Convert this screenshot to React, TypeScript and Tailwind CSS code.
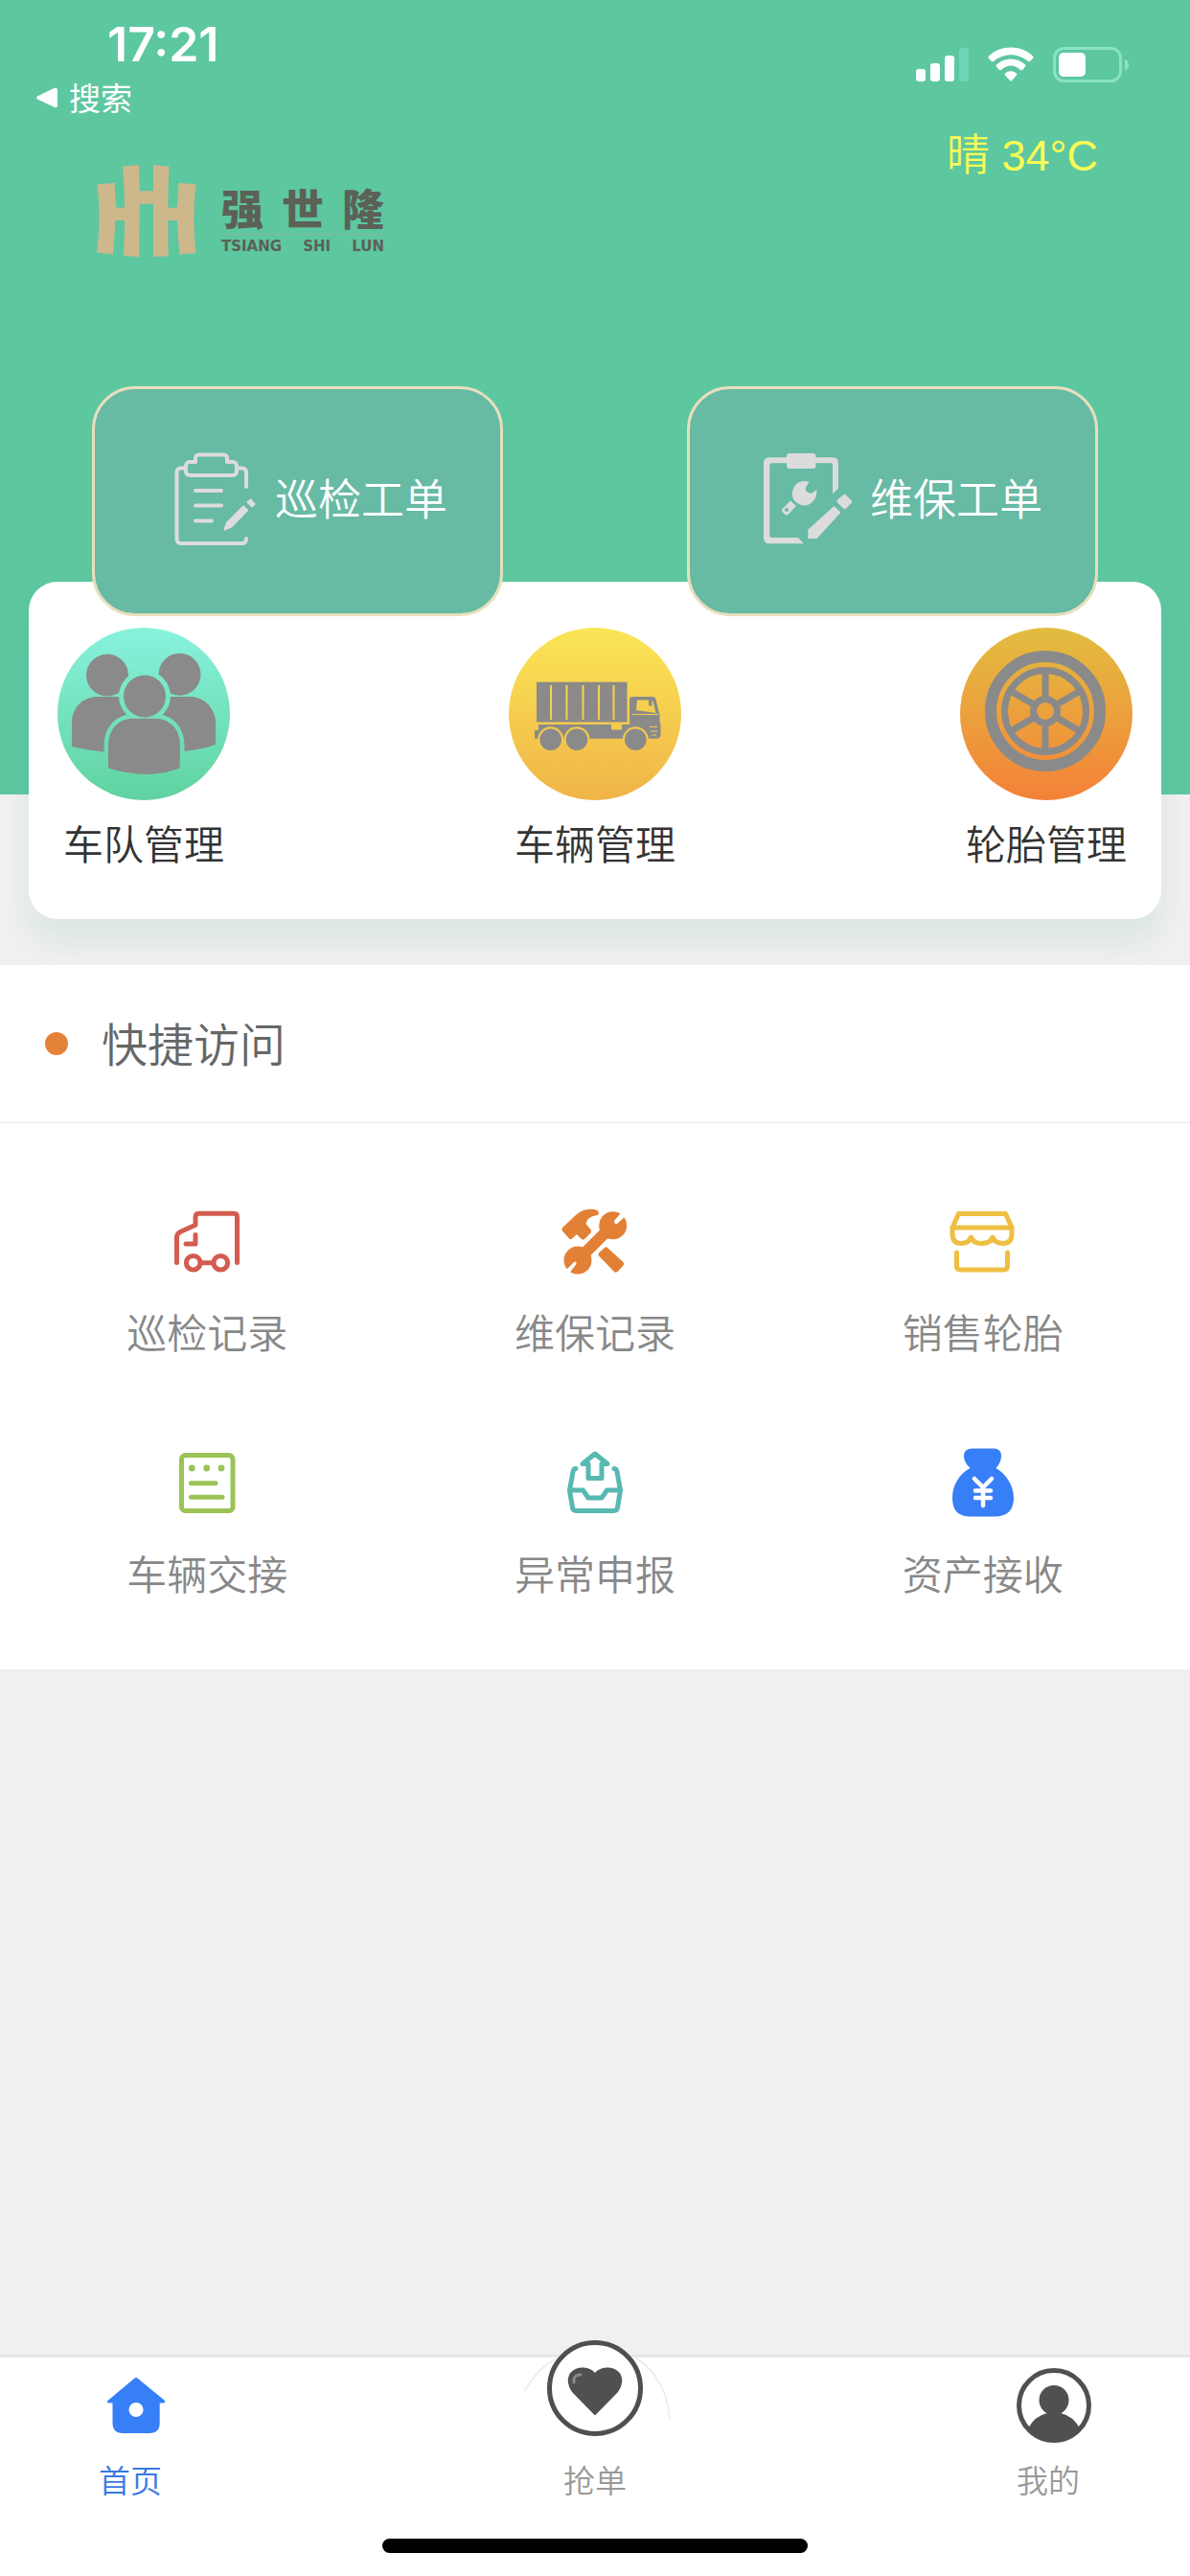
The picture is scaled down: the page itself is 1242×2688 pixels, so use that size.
import type { ReactNode } from "react";

const GRAY = "#8a8a8a";
const SILVER = "#dcdcdc";
const BLUE = "#377ff6";

function SignalIcon() {
  return (
    <svg width="55" height="37" viewBox="0 0 55 37" fill="#fff" aria-hidden="true">
      <rect x="0" y="23" width="10" height="13" rx="3" />
      <rect x="15" y="17" width="10" height="19" rx="3" />
      <rect x="30" y="9" width="10" height="27" rx="3" />
      <rect x="45" y="1" width="10" height="35" rx="3" fill="#70d5b4" />
    </svg>
  );
}

function WifiIcon() {
  return (
    <svg width="48" height="37" viewBox="0 0 48 37" fill="#fff" aria-hidden="true">
      <path d="M1 9.500 C13 -2.500 35 -2.500 47 9.500 Q48 11 47 12 L44 15 Q43 15.500 42 15 C32 6 16 6 6 15 Q5 15.500 4 15 L1 12 Q0 11 1 9.500Z" />
      <path d="M9 18.500 C17 10.500 31 10.500 39 18.500 Q40 19.500 39 20.500 L36 24 Q35 24.500 34 24 C28 18 20 18 14 24 Q13 24.500 12 24 L9 20.500 Q8 19.500 9 18.500Z" />
      <path d="M18 27.500 Q24 23 30 27.500 Q31 28.500 30 29.500 L25 35 Q24 36.500 23 35 L18 29.500 Q17 28.500 18 27.500Z" />
    </svg>
  );
}

function BatteryIcon() {
  return (
    <svg width="79" height="37" viewBox="0 0 79 37" aria-hidden="true">
      <rect x="1.500" y="1.500" width="69" height="34" rx="10" fill="none" stroke="#8be2c5" strokeWidth="3" />
      <rect x="6" y="6" width="28" height="25" rx="5" fill="#fff" />
      <path d="M75 12.500 Q79 14.500 79 18.500 T75 24.500Z" fill="#8be2c5" />
    </svg>
  );
}

function LogoMark() {
  return (
    <svg width="104" height="96" viewBox="0 0 104 96" fill="#cdb88b" aria-hidden="true">
      <path d="M0.500 20.500 L18.500 18.700 Q19 32 20.500 44.700 H29 Q29 22 27 1.700 L44 0 Q44.300 14 44.700 27.300 H59 V0 L75.600 1.700 Q74.200 22 74.400 44.700 H83.500 Q85 32 85.500 18.700 L103.500 20.500 Q99 56 103.500 92 L86.500 93.500 Q84.500 75 84 58 H74.400 Q74 77 74.800 95.300 L59 96 V40.700 H44.700 L44.300 96 L28 94.700 Q29 76 29 58 H19.500 Q18.500 75 17 93.500 L0 91.500 Q5 56 0.500 20.500Z" />
    </svg>
  );
}

function InspectIcon() {
  return (
    <svg width="108" height="108" viewBox="0 0 108 108" fill="none" stroke={SILVER} strokeWidth="4" strokeLinecap="round" strokeLinejoin="round" aria-hidden="true">
      <path d="M24 19.500 H19 Q14.500 19.500 14.500 24 V93.500 Q14.500 98 19 98 H82 Q87 98 87 93" />
      <path d="M78 19.500 H82 Q87 19.500 87 24 V39" />
      <path d="M34 13 V9 a3.500 3.500 0 0 1 3.500 -3.500 H63.500 a3.500 3.500 0 0 1 3.500 3.500 V13 H73 a4 4 0 0 1 4 4 V23 a4 4 0 0 1 -4 4 H28 a4 4 0 0 1 -4 -4 V17 a4 4 0 0 1 4 -4 Z" />
      <path d="M34 43 H61 M34 58.500 H61 M34 74.500 H51" />
      <path d="M64.500 83.500 L67 76.500 L84 59.500 L88 63.500 L71.500 80.500Z" fill={SILVER} strokeWidth="2" />
      <path d="M88.500 55 L91.500 52.500 L95.500 57 L93 59.500Z" fill={SILVER} strokeWidth="2" />
    </svg>
  );
}

function RepairIcon() {
  return (
    <svg width="108" height="108" viewBox="0 0 108 108" fill={SILVER} aria-hidden="true">
      <path d="M12 8.300 H31 V14.300 H14.500 Q12.300 14.300 12.300 16.500 V90 Q12.300 92 14.500 92 H42 L48 98.300 H12 Q6 98.300 6 92 V14.500 Q6 8.300 12 8.300Z" />
      <path d="M59 8.300 H78 Q84 8.300 84 14.500 V40.700 L78 46.500 V16.500 Q78 14.300 76 14.300 H59Z" />
      <rect x="30" y="4" width="30.500" height="16" rx="3" />
      <path d="M53.500 33.800 Q44 31 38.500 38 Q34 45 37 52 Q43 60 52 58 Q62 54 61.500 42 L56 46 Q50 45 49.500 40.500Z" />
      <path fillRule="evenodd" d="M34 53.500 L40 59 L32 67.500 Q30 69.500 28 67.500 L25.500 65 Q24.500 63.500 25.500 62Z M30 61 a2 2 0 1 0 0.100 0Z" />
      <path d="M79.500 59 L86.500 65.700 L61.500 93 H52.400 V83.500Z" />
      <path d="M83 52.500 L89.500 47 Q90.500 46.300 91.500 47 L98 53.500 Q98.700 54.500 98 55.500 L91.800 61.800 Q90.500 62.500 89.500 61.800 L83 55.500 Q82 54 83 52.500Z" />
    </svg>
  );
}

function TeamIcon() {
  const body = "M53 146.500 V124 C53 105 64 94.700 79 94.700 H102 C117 94.700 128 105 128 124 L127.500 146.500 Q110 153 95 153 Q72 153 53 146.500Z";
  return (
    <svg width="180" height="180" viewBox="0 0 180 180" fill={GRAY} aria-hidden="true">
      <mask id="team-gap">
        <rect width="180" height="180" fill="#fff" />
        <circle cx="91" cy="71.500" r="27" fill="#000" />
        <path d={body} fill="#000" stroke="#000" strokeWidth="9" />
      </mask>
      <g mask="url(#team-gap)">
        <circle cx="52" cy="49.500" r="22" />
        <circle cx="127.500" cy="48.700" r="22" />
        <path d="M15 124 V97 C16 82 28 72 42 72 H90 V131 Q55 133 15 124Z" />
        <path d="M165 122 V97 C163 82 152 72 138 72 H90 V131 Q135 132 165 122Z" />
      </g>
      <circle cx="91" cy="71.500" r="22" />
      <path d={body} />
    </svg>
  );
}

function TruckIcon() {
  return (
    <svg width="180" height="180" viewBox="0 0 180 180" fill={GRAY} aria-hidden="true">
      <mask id="truck-gap">
        <rect width="180" height="180" fill="#fff" />
        <circle cx="43.700" cy="116.700" r="13.500" fill="#000" />
        <circle cx="71" cy="116.700" r="13.500" fill="#000" />
        <circle cx="132.300" cy="116.700" r="13.500" fill="#000" />
        <path d="M44 60 V96 M60.500 60 V96 M77.500 60 V96 M94 60 V96 M109.500 60 V96" stroke="#000" strokeWidth="2" />
        <path d="M129 90.500 H156 M147 103.500 H155 M148 108 H155 M149 112 H154" stroke="#000" strokeWidth="1" />
        <path d="M134 75.500 H146 V81 L149.500 82 V76.500 H150.500 L153.500 89 L133 86Z" fill="#000" />
      </mask>
      <g mask="url(#truck-gap)">
        <rect x="29" y="56.700" width="94.500" height="41.800" />
        <path d="M31 101 H107 V106.500 H118 V101 H126 V75 Q126 72 129 72 H150 Q153 72 153.500 75 L157.500 91 V98 Q158.500 99 158.500 101 V112 Q158.500 115 155 115.700 H85 L82 115.700 H27 V107 H31Z" />
      </g>
      <circle cx="43.700" cy="116.700" r="11.300" />
      <circle cx="71" cy="116.700" r="11.300" />
      <circle cx="132.300" cy="116.700" r="11.300" />
    </svg>
  );
}

function TireIcon() {
  return (
    <svg width="180" height="180" viewBox="0 0 180 180" fill="none" stroke={GRAY} aria-hidden="true">
      <circle cx="89" cy="87" r="57" strokeWidth="12" />
      <circle cx="89" cy="87" r="42.500" strokeWidth="7" />
      <circle cx="89" cy="87" r="12.500" strokeWidth="7" />
      {[0, 60, 120, 180, 240, 300].map((deg) => (
        <path key={deg} d="M89 72 V46" strokeWidth="7" transform={`rotate(${deg} 89 87)`} />
      ))}
    </svg>
  );
}

function LineIcon({ color, children }: { color: string; children: ReactNode }) {
  return (
    <svg width="72" height="72" viewBox="0 0 72 72" fill="none" stroke={color} strokeWidth="5" strokeLinecap="round" strokeLinejoin="round" aria-hidden="true">
      {children}
    </svg>
  );
}

const inspectLog = (
  <LineIcon color="#d35c4f">
    <path d="M4.500 58.500 V32 Q4.500 28 9 26 L24 19.300 V11 Q24 7.300 27.500 7.300 H64 Q67.500 7.300 67.500 11 V58.500" />
    <path d="M24 29.500 V39 H14" />
    <circle cx="21.700" cy="58.700" r="7.300" />
    <circle cx="50.300" cy="58.700" r="7.300" />
    <path d="M30 58.700 H42" />
  </LineIcon>
);

const repairLog = (
  <svg width="72" height="72" viewBox="0 0 72 72" fill="#e28035" aria-hidden="true">
    <mask id="wrench-gap">
      <rect width="72" height="72" fill="#fff" />
      <path d="M64.500 5 L56 15 Q55.500 18.500 59 18 L69 9Z M5 67 L14 58 Q17 56.500 16.500 60 L8 71Z" fill="#000" />
    </mask>
    <g mask="url(#wrench-gap)">
      <circle cx="54.700" cy="19.700" r="14.500" />
      <circle cx="18" cy="56" r="14.500" />
      <path d="M52 22 L20 54" stroke="#e28035" strokeWidth="12" />
    </g>
    <path d="M3 21 L17 8 Q24 2 34 2.700 Q40 3.500 40 7 Q39.500 9 36 9.500 Q28 11 26.500 18 L31.500 24 q1 2 0 3.500 L25 34 q-2 1 -3 0 l-5 -5 -5 4.500 q-1.500 1 -3 0 L2 25.500 q-1.500 -2.500 1 -4.500Z" />
    <path d="M46 43 Q47.500 41.500 49 43 L65.500 58 Q67 59.500 65.500 61.500 L59.500 68 Q57.500 69.500 56 68 L40 51.500 Q39 50 40 48.500Z" />
  </svg>
);

const sellTires = (
  <LineIcon color="#efbf43">
    <g transform="translate(1 0)">
      <path d="M3 22 L9.500 7.500 H58.500 L65 22 Z" />
      <path d="M3 22 V28 Q3 38.500 12 38.500 Q20 38.500 22.500 32 Q25 38.500 33.500 38.500 Q42.500 38.500 45 32 Q47.500 38.500 56 38.500 Q65 38.500 65 28 V22" />
      <path d="M7.500 48 V62 Q7.500 66 11.500 66 H56.500 Q60.500 66 60.500 62 V48" />
    </g>
  </LineIcon>
);

const handover = (
  <LineIcon color="#9cc357">
    <rect x="9.500" y="7.500" width="53.500" height="58" rx="4" />
    <path d="M19.500 36.700 H45 M19.500 51.300 H52" />
    <g fill="#9cc357" stroke="none">
      <circle cx="20.300" cy="21" r="3.400" />
      <circle cx="35.700" cy="21" r="3.400" />
      <circle cx="51" cy="21" r="3.400" />
    </g>
  </LineIcon>
);

const report = (
  <LineIcon color="#57b9b1">
    <path d="M36 6 L49 16.500 H43 V31.500 H29 V16.500 H23 Z" />
    <path d="M16 21.500 Q13.500 21.500 13 25 L9.500 44 L12.500 62 Q13 65.500 16.500 65.500 H55.500 Q59 65.500 59.500 62 L62.500 44 L59 25 Q58.500 21.500 56 21.500" />
    <path d="M9.500 44 H23.500 L29 52 H43 L48.500 44 H62.500" />
  </LineIcon>
);

const assets = (
  <svg width="72" height="72" viewBox="0 0 72 72" fill={BLUE} aria-hidden="true">
    <path d="M24 0.500 H48 Q55 1 55 8 Q55 15 49.500 21 C60 27 68 39 68 52 C68 65 61 71.500 48 71.500 H23 C10 71.500 4 65 4 52 C4 39 11 27 22.500 21 Q16 15 16 8 Q16 1 24 0.500Z" />
    <path d="M27 32 L36 41 L45 32 M36 41 V60 M28 44.500 H44 M28 52 H44" fill="none" stroke="#fff" strokeWidth="4.500" strokeLinecap="round" />
  </svg>
);

const workOrders = [
  { label: "巡检工单", icon: <InspectIcon /> },
  { label: "维保工单", icon: <RepairIcon /> },
];

const managers = [
  { label: "车队管理", icon: <TeamIcon />, tone: "from-[#88f2dd] to-[#60d2a0]" },
  { label: "车辆管理", icon: <TruckIcon />, tone: "from-[#fae656] to-[#f0b447]" },
  { label: "轮胎管理", icon: <TireIcon />, tone: "from-[#e1bd40] to-[#f38138]" },
];

const shortcuts = [
  { label: "巡检记录", icon: inspectLog },
  { label: "维保记录", icon: repairLog },
  { label: "销售轮胎", icon: sellTires },
  { label: "车辆交接", icon: handover },
  { label: "异常申报", icon: report },
  { label: "资产接收", icon: assets },
];

function StatusBar() {
  return (
    <div className="flex items-start justify-between pr-16 text-white">
      <div className="pt-[22px]">
        <div className="pl-[112px] font-['Inter'] text-[50px] leading-[48px] font-semibold">17:21</div>
        <button type="button" className="mt-2 flex h-12 items-center gap-3 pl-[38px] text-[33px]">
          <svg width="22" height="22" viewBox="0 0 22 22" fill="#fff" aria-hidden="true">
            <path d="M1 9.500 L19 0.800 Q22 0 22 3 V19 Q22 22 19 21 L1 12.500 Q-0.500 11 1 9.500Z" />
          </svg>
          搜索
        </button>
      </div>
      <div className="flex gap-5 pt-[49px]">
        <SignalIcon />
        <WifiIcon />
        <BatteryIcon />
      </div>
    </div>
  );
}

function Brand() {
  return (
    <div className="flex items-start gap-[26px] pt-[46px] pl-[5px]">
      <LogoMark />
      <div className="w-[170px] pt-[22px] text-[#5c6156]">
        <div className="flex justify-between text-[44px] leading-[44px] font-black">
          <span>强</span>
          <span>世</span>
          <span>隆</span>
        </div>
        <div className="mt-1.5 h-px bg-[#86b893]" />
        <div className="flex justify-between pt-1 font-['DejaVu_Sans'] text-[15px] leading-4 font-bold">
          <span>TSIANG</span>
          <span>SHI</span>
          <span>LUN</span>
        </div>
      </div>
    </div>
  );
}

function TabBar() {
  return (
    <nav className="border-t-[3px] border-[#e6e6e6] bg-white">
      <div className="grid grid-cols-3 px-[103px] pt-[11px] text-[33px] leading-[48px] font-[350] text-[#999]">
        <button type="button" className="flex flex-col items-start justify-self-start text-[#3a78e4]">
          <svg width="78" height="78" viewBox="0 0 78 78" fill={BLUE} aria-hidden="true">
            <path fillRule="evenodd" d="M37 11 Q39 9 41 11 L69 34 Q70 36.500 67 36.500 H63.700 V57 Q63.700 68 53 68 H25 Q14.500 68 14.500 57 V36.500 H11 Q8 36.500 9.500 34Z M39 36 a7.500 7.500 0 1 0 0.100 0Z" />
          </svg>
          <span className="mt-3.5">首页</span>
        </button>
        <button type="button" className="relative flex flex-col items-center justify-self-center pt-[78px]">
          <svg className="absolute -top-9 left-1/2 -translate-x-1/2" width="160" height="110" viewBox="0 0 160 110" aria-hidden="true">
            <path d="M6.500 60 Q18 38 39 26 M122 25 Q155 46 158 90" fill="none" stroke="#ececec" strokeWidth="1.500" />
            <circle cx="80" cy="57" r="47.500" fill="#fff" stroke="#4f4f4f" strokeWidth="5" />
            <path d="M80 85.500 L56 61 Q49 51 53.500 42 Q59 34.500 68 35.500 Q76 36 80 41 Q84 36 92 35.500 Q101 34.500 106.500 42 Q111 51 104 61Z" fill="#505050" />
            <path d="M58 51 Q57 43 65 43" fill="none" stroke="#8a8a8a" strokeWidth="3" strokeLinecap="round" />
          </svg>
          <span className="mt-3.5">抢单</span>
        </button>
        <button type="button" className="flex flex-col items-start justify-self-end">
          <svg width="78" height="78" viewBox="0 0 78 78" fill="#505050" aria-hidden="true">
            <circle cx="39" cy="39" r="36.500" fill="none" stroke="#505050" strokeWidth="5" />
            <circle cx="39" cy="33.500" r="15.500" />
            <path d="M12 63 Q19 50 32 47 H46 Q59 50 66 63 Q55 77 39 77 Q23 77 12 63Z" />
          </svg>
          <span className="mt-3.5">我的</span>
        </button>
      </div>
      <div className="mx-auto mt-[38px] mb-6 h-[15px] w-[444px] rounded-full bg-black" />
    </nav>
  );
}

export default function App() {
  return (
    <div className="flex min-h-screen flex-col bg-[#f0f0f0] font-['Noto_Sans_CJK_SC',sans-serif]">
      <header className="bg-[#5dc7a0] pb-[186px]">
        <StatusBar />
        <div className="flex items-start justify-between px-24">
          <Brand />
          <div className="pt-2.5 font-['Liberation_Sans','Noto_Sans_CJK_SC',sans-serif] text-[45px] leading-[54px] font-[350] text-[#f9fb55]">晴 34°C</div>
        </div>
        <div className="relative z-10 mt-[135px] flex justify-between px-24">
          {workOrders.map((order) => (
            <button
              key={order.label}
              type="button"
              className="flex h-[240px] w-[429px] items-center justify-center gap-[9px] rounded-[45px] border-[3px] border-[#e8dfbd] bg-[#67baa3] pl-4 text-[45px] font-[350] text-white"
            >
              {order.icon}
              <span className="pb-2">{order.label}</span>
            </button>
          ))}
        </div>
      </header>

      <section className="relative mx-[30px] -mt-[222px] mb-12 flex justify-between rounded-[30px] bg-white px-[30px] pt-12 pb-[50px] shadow-[0_24px_30px_rgba(93,180,150,0.14)]">
        {managers.map((item) => (
          <button key={item.label} type="button" className="flex flex-col items-center text-[42px] leading-[60px] font-[350] text-[#333]">
            <span className={`rounded-full bg-linear-to-b ${item.tone}`}>{item.icon}</span>
            <span className="mt-3.5">{item.label}</span>
          </button>
        ))}
      </section>

      <section className="relative bg-white">
        <div className="flex h-[165px] items-center gap-[35px] border-b border-[#e8e8e8] pl-[47px]">
          <span className="size-6 rounded-full bg-[#e48338]" />
          <h2 className="pb-1 text-[48px] leading-[60px] font-[350] text-[#666]">快捷访问</h2>
        </div>
        <div className="grid grid-cols-3 px-[14px] py-[33px]">
          {shortcuts.map((item) => (
            <button key={item.label} type="button" className="flex flex-col items-center pt-[54px] pb-[38px] text-[42px] leading-[60px] font-[350] text-[#888]">
              {item.icon}
              <span className="mt-7">{item.label}</span>
            </button>
          ))}
        </div>
      </section>

      <div className="flex-1" />
      <TabBar />
    </div>
  );
}
